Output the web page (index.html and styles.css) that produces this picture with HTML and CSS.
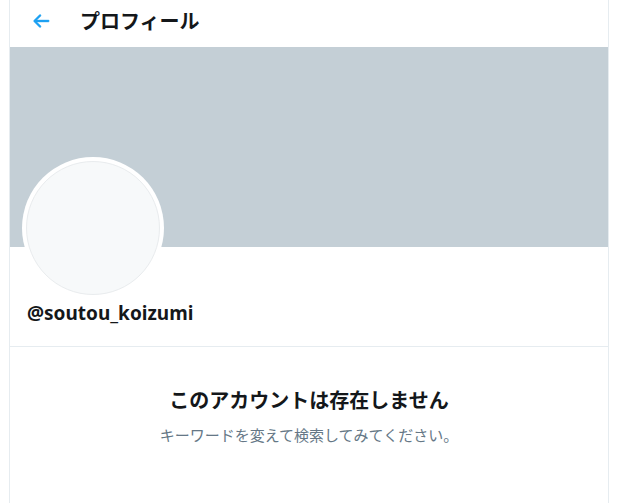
FILE: index.html
```html
<!DOCTYPE html>
<html lang="ja">
<head>
<meta charset="utf-8">
<title>プロフィール</title>
<link rel="stylesheet" href="styles.css">
</head>
<body>
<main class="column">
  <header class="topbar">
    <span class="back">
      <svg viewBox="0 0 24 24" width="22" height="22"><path d="M20 11H7.414l4.293-4.293c.39-.39.39-1.023 0-1.414s-1.023-.39-1.414 0l-6 6c-.39.39-.39 1.023 0 1.414l6 6c.195.195.45.293.707.293s.512-.098.707-.293c.39-.39.39-1.023 0-1.414L7.414 13H20c.553 0 1-.447 1-1s-.447-1-1-1z"/></svg>
    </span>
    <h1 class="title">プロフィール</h1>
  </header>
  <div class="banner"></div>
  <section class="profile">
    <div class="avatar"><div class="avatar-inner"></div></div>
    <div class="handle">@soutou_koizumi</div>
  </section>
  <section class="empty">
    <h2 class="empty-title">このアカウントは存在しません</h2>
    <p class="empty-text">キーワードを変えて検索してみてください。</p>
  </section>
</main>
</body>
</html>
```
FILE: styles.css
```css
html, body {
  margin: 0;
  padding: 0;
  background: #ffffff;
}
body {
  font-family: "Noto Sans", "Noto Sans CJK JP", sans-serif;
  color: #14171a;
}
.column {
  margin-left: 9px;
  width: 598px;
  min-height: 503px;
  border-left: 1px solid #e6ecf0;
  border-right: 1px solid #e6ecf0;
}
.topbar {
  height: 42px;
  padding-bottom: 5px;
  display: flex;
  align-items: center;
}
.back {
  display: flex;
  margin-left: 20px;
  width: 22px;
  height: 22px;
}
.back svg {
  fill: #1da1f2;
  stroke: #1da1f2;
  stroke-width: 0.5;
}
.title {
  margin: 0 0 0 28px;
  font-family: "Noto Sans CJK JP", sans-serif;
  font-size: 20px;
  font-weight: 700;
  line-height: 24px;
}
.banner {
  height: 200px;
  background: #c4cfd6;
}
.profile {
  display: flow-root;
  padding: 0 12px 21px;
  border-bottom: 1px solid #e6ecf0;
}
.avatar {
  margin-top: -90px;
  width: 134px;
  height: 134px;
  padding: 4px;
  border-radius: 50%;
  background: #ffffff;
}
.avatar-inner {
  width: 132px;
  height: 132px;
  border-radius: 50%;
  background: #f7f9fa;
  border: 1px solid #e9ecee;
}
.handle {
  margin: 2px 0 0 5px;
  font-size: 19px;
  font-weight: 700;
  line-height: 24px;
}
.empty {
  padding-top: 40px;
  text-align: center;
}
.empty-title {
  margin: 0;
  font-family: "Noto Sans CJK JP", sans-serif;
  font-size: 20px;
  font-weight: 700;
  line-height: 26px;
}
.empty-text {
  margin: 12px 0 0;
  font-family: "Noto Sans CJK JP", sans-serif;
  font-size: 15px;
  line-height: 20px;
  color: #657786;
}
```
